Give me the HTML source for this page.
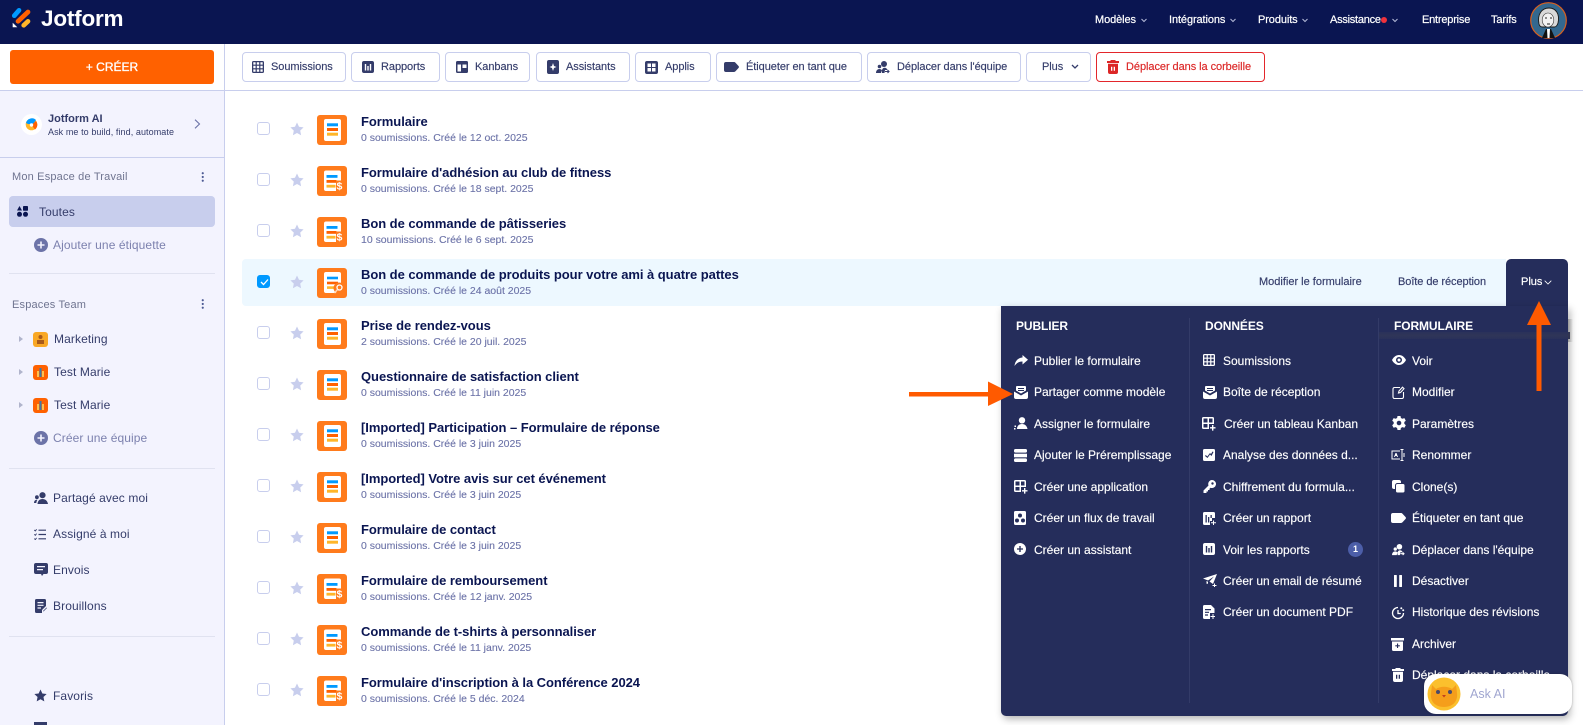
<!DOCTYPE html>
<html lang="fr"><head><meta charset="utf-8"><title>Jotform</title>
<style>
html,body{margin:0;padding:0}
body{width:1583px;height:725px;overflow:hidden;position:relative;background:#fff;font-family:"Liberation Sans",sans-serif;color:#0A1551}
div,span,svg{position:absolute}
.t{white-space:nowrap;line-height:16px}
svg.i{fill:currentColor;display:block}
.nav{top:12px;color:#fff;font-size:11px;-webkit-text-stroke:.2px #fff;letter-spacing:-.1px}
.btn{top:52px;height:28px;border:1px solid #C8CEED;border-radius:4px;background:#fff;box-sizing:content-box}
.bt{top:59px;font-size:11px;color:#343C6A;-webkit-text-stroke:.15px #343C6A;letter-spacing:-.06px}
.ti{top:61px;color:#343C6A}
.sb{font-size:12px;color:#343C6A;letter-spacing:.1px}
.sg{color:#7C81AE}
.sh{font-size:11px;color:#6F7490;letter-spacing:.18px;left:12px}
.si{left:34px;color:#343C6A}
.hr{left:9px;width:206px;height:1px;background:#E0E2F0}
.r{left:0;width:1000px;height:30px}
.cb{left:257px;top:7px;width:11px;height:11px;border:1.5px solid #C8CEED;border-radius:3px;background:#fff}
.st{left:290px;top:7px;color:#C8CEED}
.fi{left:317px;top:0}
.h{left:361px;top:-1px;font-size:13px;font-weight:700;color:#0A1551;letter-spacing:-.05px}
.s{left:361px;top:15px;font-size:10.5px;color:#6C73A8;letter-spacing:-.01px;-webkit-text-stroke:.12px #6C73A8}
.m{font-size:12px;color:#fff;-webkit-text-stroke:.15px #fff;letter-spacing:0}
.mh{top:318px;font-size:12px;font-weight:700;color:#fff;letter-spacing:-.1px}
.mi{color:#fff}
</style></head><body>
<svg width="0" height="0" style="position:absolute">
<defs>
<symbol id="f0" viewBox="0 0 30 30"><rect width="30" height="30" rx="3" fill="#FF7B1C"/><rect x="7" y="4" width="17" height="22" rx="2" fill="#fff"/><rect x="10" y="8.300" width="11" height="3" fill="#0099FF"/><rect x="10" y="13" width="11" height="3" fill="#FF6100"/><rect x="10" y="17.700" width="11" height="3" fill="#FFB629"/></symbol>
<symbol id="f1" viewBox="0 0 30 30"><rect width="30" height="30" rx="3" fill="#FF7B1C"/><rect x="7" y="4.500" width="17" height="20.500" rx="2" fill="#fff"/><rect x="9.500" y="9" width="11" height="2.800" fill="#0099FF"/><rect x="9.500" y="14" width="10" height="2.800" fill="#FF6100"/><rect x="9.500" y="18.800" width="9" height="2.800" fill="#FFB629"/><rect x="19" y="14.500" width="7" height="11" fill="#FF7B1C"/><text x="19.500" y="23.500" font-family="Liberation Sans" font-size="10.500" font-weight="700" fill="#fff">$</text></symbol>
<symbol id="f2" viewBox="0 0 30 30"><rect width="30" height="30" rx="3" fill="#FF7B1C"/><rect x="7" y="4" width="17" height="21" rx="2" fill="#fff"/><rect x="10" y="8.700" width="11" height="2.600" fill="#0099FF"/><rect x="10" y="13.700" width="11" height="2.600" fill="#FF6100"/><rect x="10" y="18.300" width="9" height="2.600" fill="#FFB629"/><circle cx="22" cy="20" r="5.500" fill="#FF7B1C"/><circle cx="22.500" cy="19.500" r="2.500" fill="none" stroke="#fff" stroke-width="1.300"/><path d="M20.500 21.500l-3 3.500" stroke="#FFD9B8" stroke-width="1.400"/></symbol>
<symbol id="star" viewBox="0 0 14 14"><path d="M7 .5l2 4.300 4.600.6-3.400 3.200.9 4.700L7 11l-4.100 2.300.9-4.700L.4 5.400 5 4.800z"/></symbol>
<symbol id="grid" viewBox="0 0 12 12"><path d="M1.500 0h9A1.500 1.500 0 0 1 12 1.500v9a1.500 1.500 0 0 1-1.500 1.500h-9A1.500 1.500 0 0 1 0 10.500v-9A1.500 1.500 0 0 1 1.500 0zM1.300 1.300v2.300h2.300V1.300zm3.500 0v2.300h2.400V1.300zm3.600 0v2.300h2.300V1.300zM1.300 4.800v2.400h2.300V4.800zm3.500 0v2.400h2.400V4.800zm3.600 0v2.400h2.300V4.800zM1.300 8.400v2.300h2.300V8.400zm3.500 0v2.300h2.400V8.400zm3.600 0v2.300h2.300V8.400z" fill-rule="evenodd"/></symbol>
<symbol id="rep" viewBox="0 0 12 12"><path d="M2 0h8a2 2 0 0 1 2 2v8a2 2 0 0 1-2 2H2a2 2 0 0 1-2-2V2a2 2 0 0 1 2-2zm.8 3v6.500h1.400V3zm2.500 2v4.500h1.400V5zm2.500-2v6.500h1.400V3z" fill-rule="evenodd"/></symbol>
<symbol id="kan" viewBox="0 0 12 12"><path d="M1.500 0h9A1.500 1.500 0 0 1 12 1.500v9a1.500 1.500 0 0 1-1.500 1.500h-9A1.500 1.500 0 0 1 0 10.500v-9A1.500 1.500 0 0 1 1.500 0zm0 3.500v7h3.500v-7zm5 0v3.500h4V3.500z" fill-rule="evenodd"/></symbol>
<symbol id="ast" viewBox="0 0 12 14"><path d="M2 0h8a2 2 0 0 1 2 2v10a2 2 0 0 1-2 2H2a2 2 0 0 1-2-2V2a2 2 0 0 1 2-2zm4 3L5 6 2.500 7 5 8l1 3 1-3 2.500-1L7 6z" fill-rule="evenodd"/></symbol>
<symbol id="app" viewBox="0 0 13 13"><path d="M2 0h9a2 2 0 0 1 2 2v9a2 2 0 0 1-2 2H2a2 2 0 0 1-2-2V2a2 2 0 0 1 2-2zm.500 2.500V6H6V2.500zm4.500 0V6h3.500V2.500zm-4.500 4.500v3.500H6V7zm4.500 0v3.500h3.500V7z" fill-rule="evenodd"/></symbol>
<symbol id="tag" viewBox="0 0 15 10"><path d="M2 0h8a2 2 0 0 1 1.500.7l3 3.300a1.500 1.500 0 0 1 0 2l-3 3.300A2 2 0 0 1 10 10H2a2 2 0 0 1-2-2V2a2 2 0 0 1 2-2z"/></symbol>
<symbol id="team" viewBox="0 0 14 13"><circle cx="8" cy="3" r="3"/><circle cx="3.500" cy="5.500" r="1.800"/><path d="M0 12c0-2.500 1.500-4 3.500-4 1 0 2 .5 2.500 1.300L5 12zM6 9c.5-1.500 1.500-2.200 2.500-2.200 1.500 0 2.500.8 3 2.200H9l-.5 3H6z"/><path d="M9 10.500h4M11.500 9l1.500 1.500-1.500 1.500" fill="none" stroke="currentColor" stroke-width="1.100"/></symbol>
<symbol id="shared" viewBox="0 0 14 13"><circle cx="8.500" cy="3.200" r="3.100"/><circle cx="2.900" cy="5.200" r="1.900"/><path d="M3.500 12c.2-3 2-5 5-5s5 2 5.500 5zM0 11c0-2 1-3.300 3-3.300l.4.100C2.700 9 2.400 10 2.300 11z"/></symbol>
<symbol id="trash" viewBox="0 0 12 14"><path d="M0 1h3.500V0h5v1H12v2H0zM1 3.800h10V12a2 2 0 0 1-2 2H3a2 2 0 0 1-2-2zm3 3v4h1.300v-4zm2.700 0v4H8v-4z" fill-rule="evenodd"/></symbol>
<symbol id="plus" viewBox="0 0 14 14"><path d="M7 0a7 7 0 1 1 0 14A7 7 0 0 1 7 0zM6.200 3.500v2.700H3.500v1.600h2.700v2.700h1.600V7.800h2.700V6.200H7.800V3.500z" fill-rule="evenodd"/></symbol>
<symbol id="keb" viewBox="0 0 4 12"><circle cx="2" cy="1.500" r="1.300"/><circle cx="2" cy="6" r="1.300"/><circle cx="2" cy="10.500" r="1.300"/></symbol>
<symbol id="inbox" viewBox="0 0 14 13"><path d="M3 0h8a1 1 0 0 1 1 1v3.500L7 7.500 2 4.500V1a1 1 0 0 1 1-1zM4 2v1h6V2zM4 4v1h6V4zM0 5.500l7 4 7-4V11a2 2 0 0 1-2 2H2a2 2 0 0 1-2-2z" fill-rule="evenodd"/></symbol>
<symbol id="share" viewBox="0 0 14 12"><path d="M8.500 0L14 4.700 8.500 9.500V6.500C5 6.500 2.500 8 .5 11c.5-4.500 3-8 8-8.500z"/></symbol>
<symbol id="assign" viewBox="0 0 14 13"><circle cx="8" cy="3.300" r="3.200"/><path d="M3 12c0-3 2-5 5-5s5 2 5.500 5zM.5 8.500h1.500V10H.5zM0 11h1.500v1.500H0z"/></symbol>
<symbol id="pre" viewBox="0 0 13 13"><rect y="0" width="13" height="3.600" rx="1.500"/><rect y="4.700" width="13" height="3.600" rx="0"/><rect y="9.400" width="13" height="3.600" rx="1.500"/></symbol>
<symbol id="cap" viewBox="0 0 14 14"><path d="M1.500 0h9A1.500 1.500 0 0 1 12 1.500V7H7v5H1.500A1.500 1.500 0 0 1 0 10.500v-9A1.500 1.500 0 0 1 1.500 0zm0 1.500V5.500H5.500v-4zm5.500 0V5.500h3.500v-4zM1.500 7v3.500h4V7zM10 8h1.400v2.100h2.100v1.400h-2.100v2.100H10v-2.100H8v-1.400h2z" fill-rule="evenodd"/></symbol>
<symbol id="flow" viewBox="0 0 12 14"><path d="M1.500 0h9A1.500 1.500 0 0 1 12 1.500v11a1.500 1.500 0 0 1-1.500 1.500h-9A1.500 1.500 0 0 1 0 12.500v-11A1.500 1.500 0 0 1 1.500 0zM6 2.500a2 2 0 1 0 0 4 2 2 0 0 0 0-4zM3 7.500a2 2 0 1 0 0 4 2 2 0 0 0 0-4zm6 0a2 2 0 1 0 0 4 2 2 0 0 0 0-4z" fill-rule="evenodd"/></symbol>
<symbol id="ana" viewBox="0 0 12 12"><path d="M1.500 0h9A1.500 1.500 0 0 1 12 1.500v9a1.500 1.500 0 0 1-1.500 1.500h-9A1.500 1.500 0 0 1 0 10.500v-9A1.500 1.500 0 0 1 1.500 0zM2 7l2.500 2L7 5.500 8.500 7 10.500 3l-1-.5L8 5 7 4 4.300 7.500 2.800 6z" fill-rule="evenodd"/></symbol>
<symbol id="key" viewBox="0 0 13 13"><path d="M9 0a4 4 0 1 1-1.500 7.700L6.500 8.700V10H5v1.500H3.500V13H.5v-2.500l5-5A4 4 0 0 1 9 0zm.5 2.300a1.200 1.200 0 1 0 0 2.400 1.200 1.200 0 0 0 0-2.400z" fill-rule="evenodd"/></symbol>
<symbol id="crep" viewBox="0 0 13 13"><path d="M1.500 0h9A1.500 1.500 0 0 1 12 1.500V6H9v3H7v4H1.500A1.500 1.500 0 0 1 0 11.500v-10A1.500 1.500 0 0 1 1.500 0zM2.500 3v7.500h1.300V3zm2.500 2v5.500h1.300V5zm2.500-2v3h1.300V3zM10 8.500h1v1.800h2v1h-2V13h-1v-1.700H8v-1h2z" fill-rule="evenodd"/></symbol>
<symbol id="mail" viewBox="0 0 14 13"><path d="M14 0L10 10 6.500 7.500 11 2.500 5 6.500 0 4.500zM3.500 7l1.500.8v2h-1.500zM11 9.500h1V11h1.500v1H12v1h-1v-1H9.500v-1H11z"/></symbol>
<symbol id="pdf" viewBox="0 0 12 14"><path d="M1.500 0H8l3.500 3.500V8H7v6H1.500A1.500 1.500 0 0 1 0 12.500v-11A1.500 1.500 0 0 1 1.500 0zM2 4v1.200h6V4zm0 2.700v1.200h4V6.700zm0 2.700v1.200h3V9.400zM9.500 9h1v2H12.500v1h-2v2h-1v-2h-2v-1h2z" fill-rule="evenodd"/></symbol>
<symbol id="eye" viewBox="0 0 14 10"><path d="M7 0c3 0 5.500 2 7 5-1.500 3-4 5-7 5S1.500 8 0 5c1.500-3 4-5 7-5zm0 2a3 3 0 1 0 0 6 3 3 0 0 0 0-6zm0 1.500a1.500 1.500 0 1 1 0 3 1.500 1.500 0 0 1 0-3z" fill-rule="evenodd"/></symbol>
<symbol id="edit" viewBox="0 0 13 13"><path d="M8 1.500H2.500a1.500 1.500 0 0 0-1.500 1.500v8a1.500 1.500 0 0 0 1.500 1.500h7.500a1.500 1.500 0 0 0 1.500-1.500V6M6.500 7l.5-2 3.500-3.800 1.500 1.500L8.500 6.500z" fill="none" stroke="currentColor" stroke-width="1.100"/></symbol>
<symbol id="gear" viewBox="0 0 14 14"><path d="M5.500 0h3l.4 2 1.500.8 2-.7 1.400 2.600-1.500 1.300v1.800l1.500 1.400-1.400 2.500-2-.6-1.500.9-.4 2h-3l-.4-2-1.500-.9-2 .6L.2 9.200l1.500-1.400V6L.2 4.700l1.400-2.600 2 .7 1.500-.8zM7 4.700a2.300 2.300 0 1 0 0 4.600 2.300 2.300 0 0 0 0-4.600z" fill-rule="evenodd"/></symbol>
<symbol id="ren" viewBox="0 0 14 12"><path d="M9 2H1v8h8M11 0v12M9.500 .5h3M9.500 11.500h3M13 4v4" fill="none" stroke="currentColor" stroke-width="1"/><path d="M3 8l1.500-4h1L7 8H6l-.3-1H4.300L4 8z"/></symbol>
<symbol id="clone" viewBox="0 0 13 13"><rect x="0" y="0" width="9" height="9" rx="2"/><rect x="3.500" y="3.500" width="9.500" height="9.500" rx="2" stroke="#252D5B" stroke-width="1"/></symbol>
<symbol id="pause" viewBox="0 0 8 12"><rect width="2.800" height="12" rx=".5"/><rect x="5.200" width="2.800" height="12" rx=".5"/></symbol>
<symbol id="hist" viewBox="0 0 14 14"><path d="M7 1.500A5.500 5.500 0 1 0 12.500 7M7 4v3.500h2.800" fill="none" stroke="currentColor" stroke-width="1.300"/><circle cx="10.300" cy="2.300" r="1"/><circle cx="12.200" cy="4.300" r="1"/></symbol>
<symbol id="arch" viewBox="0 0 13 13"><path d="M0 0h13v2.500H0zM1 3.500h11V11.500a1.500 1.500 0 0 1-1.500 1.500h-8A1.500 1.500 0 0 1 1 11.500zM6 5.500v1.700H4.300v1.200H6V10h1.100V8.400h1.700V7.200H7.100V5.500z" fill-rule="evenodd"/></symbol>
<symbol id="toutes" viewBox="0 0 11 11"><path d="M2.500 0L5 4.500H0z"/><rect x="6" y="0" width="5" height="4.800" rx=".8"/><circle cx="2.500" cy="8.300" r="2.500"/><circle cx="8.500" cy="8.300" r="2.500"/></symbol>
<symbol id="assm" viewBox="0 0 12 11"><path d="M4.500 1.200H12M4.500 5.500H12M4.500 9.800H12" stroke="currentColor" stroke-width="1.200" fill="none"/><path d="M.3 1l1 1 1.300-1.700M.3 5.300l1 1 1.300-1.700M.3 9.600l1 1 1.300-1.700" stroke="currentColor" stroke-width=".9" fill="none"/></symbol>
<symbol id="env" viewBox="0 0 14 13"><path d="M2 0h10a2 2 0 0 1 2 2v7a2 2 0 0 1-2 2H9.500L8 13l-1-2H2a2 2 0 0 1-2-2V2a2 2 0 0 1 2-2zm1 3v1.300h8V3zm0 3v1.300h6V6z" fill-rule="evenodd"/></symbol>
<symbol id="bro" viewBox="0 0 12 14"><path d="M1.500 0h8A1.500 1.500 0 0 1 11 1.500V7L7 11v3H1.500A1.500 1.500 0 0 1 0 12.500v-11A1.500 1.500 0 0 1 1.500 0zm1 3v1.200h6V3zm0 2.700v1.200h6V5.700zm0 2.700v1.200H6V8.400z" fill-rule="evenodd"/><path d="M8 12l3.500-3.500.5.500-3.500 3.500z"/></symbol>
</defs></svg>

<!-- header -->
<div style="left:0;top:0;width:1583px;height:44px;background:#0A1551"></div>
<svg style="left:0;top:0" width="40" height="44" viewBox="0 0 40 44"><path d="M14.300 15.700L19 10.300" stroke="#0099FF" stroke-width="4.700" stroke-linecap="round"/><path d="M18 21.300L28 12" stroke="#FF6100" stroke-width="4.700" stroke-linecap="round"/><path d="M23.700 25.300L28 21.300" stroke="#FFB629" stroke-width="4.700" stroke-linecap="round"/><path d="M12.700 22.700v4.600h4.600z" fill="#fff"/></svg>
<div class="t" style="left:41px;top:7px;line-height:24px;font-size:22.5px;font-weight:700;color:#fff;letter-spacing:-.2px">Jotform</div>
<div class="t nav" style="left:1095px">Modèles</div>
<svg style="left:1141px;top:18px" width="6" height="5" viewBox="0 0 6 5"><path d="M.5 1l2.500 2.500L5.500 1" fill="none" stroke="#B5BAD8" stroke-width="1"/></svg>
<div class="t nav" style="left:1169px">Intégrations</div>
<svg style="left:1230px;top:18px" width="6" height="5" viewBox="0 0 6 5"><path d="M.5 1l2.500 2.500L5.500 1" fill="none" stroke="#B5BAD8" stroke-width="1"/></svg>
<div class="t nav" style="left:1258px">Produits</div>
<svg style="left:1302px;top:18px" width="6" height="5" viewBox="0 0 6 5"><path d="M.5 1l2.500 2.500L5.500 1" fill="none" stroke="#B5BAD8" stroke-width="1"/></svg>
<div class="t nav" style="left:1330px;letter-spacing:-.25px">Assistance</div>
<div style="left:1381px;top:17px;width:6px;height:6px;border-radius:50%;background:#F0323C"></div>
<svg style="left:1392px;top:18px" width="6" height="5" viewBox="0 0 6 5"><path d="M.5 1l2.500 2.500L5.500 1" fill="none" stroke="#B5BAD8" stroke-width="1"/></svg>
<div class="t nav" style="left:1422px;letter-spacing:-.2px">Entreprise</div>
<div class="t nav" style="left:1491px">Tarifs</div>
<svg style="left:1530px;top:2px" width="37" height="37" viewBox="0 0 37 37"><circle cx="18.500" cy="18.500" r="17.800" fill="#33688F" stroke="#D9601E" stroke-width="1.200"/><path d="M9 22c-2-10 3-16 10-16s11 6 9 15c-.5 2-2 4-3.500 4h-12C11 25 9.500 24 9 22z" fill="#D9D9D9" stroke="#1a1a1a" stroke-width=".9"/><ellipse cx="18" cy="18" rx="5.800" ry="7" fill="#F2F2F2" stroke="#333" stroke-width=".6"/><path d="M15 16h2M20 16h2M17 22h3" stroke="#222" stroke-width="1"/><path d="M12 36l4-9h5l4 9z" fill="#111"/><path d="M17 27h3l-.5 9h-2z" fill="#fff"/></svg>

<!-- sidebar -->
<div style="left:0;top:44px;width:224px;height:46px;background:#fff"></div>
<div style="left:0;top:90px;width:224px;height:635px;background:#F3F3FE"></div>
<div style="left:224px;top:44px;width:1px;height:681px;background:#C8CEED"></div>
<div style="left:0;top:90px;width:1583px;height:1px;background:#C8CEED"></div>
<div style="left:10px;top:50px;width:204px;height:34px;background:#FF6100;border-radius:3px"></div>
<div class="t" style="left:10px;top:59px;width:204px;text-align:center;color:#fff;font-size:12px;-webkit-text-stroke:.3px #fff">+ CRÉER</div>

<div style="left:21px;top:114px;width:21px;height:21px;border-radius:50%;background:#fff"></div>
<svg style="left:25px;top:118px" width="13" height="13" viewBox="0 0 13 13"><circle cx="6.500" cy="6.500" r="5.800" fill="#FFB629"/><path d="M1 5a6 6 0 0 1 10-3L8 6H3z" fill="#0099FF"/><path d="M11 3a6 6 0 0 1-1 8.500L6.500 7z" fill="#FF6100"/><circle cx="6.500" cy="7" r="1.700" fill="#fff"/></svg>
<div class="t" style="left:48px;top:111px;font-size:11px;font-weight:700;color:#343C6A">Jotform AI</div>
<div class="t" style="left:48px;top:124px;font-size:9px;color:#343C6A;letter-spacing:.08px">Ask me to build, find, automate</div>
<svg style="left:194px;top:119px" width="7" height="10" viewBox="0 0 7 10"><path d="M1 .7L5.500 5 1 9.300" fill="none" stroke="#6C73A8" stroke-width="1.100"/></svg>
<div style="left:0;top:157px;width:224px;height:1px;background:#C8CEED"></div>

<div class="t sh" style="top:169px">Mon Espace de Travail</div>
<svg class="i" style="left:201px;top:172px;color:#4C5A94" width="3.500" height="10"><use href="#keb"/></svg>
<div style="left:9px;top:196px;width:206px;height:31px;background:#C8CEED;border-radius:4px"></div>
<svg class="i" style="left:17px;top:206px;color:#0A1551" width="11" height="11"><use href="#toutes"/></svg>
<div class="t sb" style="left:39px;top:204px;color:#343C6A">Toutes</div>
<svg class="i" style="left:34px;top:238px;color:#6C73A8" width="14" height="14"><use href="#plus"/></svg>
<div class="t sb sg" style="left:53px;top:237px">Ajouter une étiquette</div>
<div class="hr" style="top:273px"></div>

<div class="t sh" style="top:297px">Espaces Team</div>
<svg class="i" style="left:201px;top:299px;color:#4C5A94" width="3.500" height="10"><use href="#keb"/></svg>
<svg style="left:19px;top:336px" width="4" height="6" viewBox="0 0 4 6"><path d="M0 0l4 3-4 3z" fill="#B0B4CC"/></svg>
<div style="left:33px;top:332px;width:15px;height:15px;border-radius:3px;background:#F9A825"></div>
<svg style="left:36px;top:334px" width="9" height="11" viewBox="0 0 9 11"><rect x="2.500" y="1" width="4" height="4" rx="2" fill="#A85A1A"/><rect x="1" y="6" width="7" height="4" fill="#A85A1A"/></svg>
<div class="t sb" style="left:54px;top:331px">Marketing</div>
<svg style="left:19px;top:369px" width="4" height="6" viewBox="0 0 4 6"><path d="M0 0l4 3-4 3z" fill="#B0B4CC"/></svg>
<div style="left:33px;top:365px;width:15px;height:15px;border-radius:3px;background:#FF6100"></div>
<svg style="left:36px;top:368px" width="9" height="9" viewBox="0 0 9 9"><rect x="1" y="3" width="2" height="6" fill="#FFC04D"/><rect x="3.500" y="0" width="2" height="9" fill="#3E7BA6"/><rect x="6" y="3" width="2" height="6" fill="#FFC04D"/></svg>
<div class="t sb" style="left:54px;top:364px">Test Marie</div>
<svg style="left:19px;top:402px" width="4" height="6" viewBox="0 0 4 6"><path d="M0 0l4 3-4 3z" fill="#B0B4CC"/></svg>
<div style="left:33px;top:398px;width:15px;height:15px;border-radius:3px;background:#FF6100"></div>
<svg style="left:36px;top:401px" width="9" height="9" viewBox="0 0 9 9"><rect x="1" y="3" width="2" height="6" fill="#FFC04D"/><rect x="3.500" y="0" width="2" height="9" fill="#3E7BA6"/><rect x="6" y="3" width="2" height="6" fill="#FFC04D"/></svg>
<div class="t sb" style="left:54px;top:397px">Test Marie</div>
<svg class="i" style="left:34px;top:431px;color:#6C73A8" width="14" height="14"><use href="#plus"/></svg>
<div class="t sb sg" style="left:53px;top:430px">Créer une équipe</div>
<div class="hr" style="top:468px"></div>

<svg class="i si" style="top:492px;color:#343C6A" width="14" height="13"><use href="#shared"/></svg>
<div class="t sb" style="left:53px;top:490px">Partagé avec moi</div>
<svg class="i si" style="top:529px" width="12" height="11"><use href="#assm"/></svg>
<div class="t sb" style="left:53px;top:526px">Assigné à moi</div>
<svg class="i si" style="top:563px" width="14" height="13"><use href="#env"/></svg>
<div class="t sb" style="left:53px;top:562px">Envois</div>
<svg class="i si" style="left:35px;top:599px" width="12" height="14"><use href="#bro"/></svg>
<div class="t sb" style="left:53px;top:598px">Brouillons</div>
<div class="hr" style="top:636px"></div>
<svg class="i si" style="top:689px" width="13" height="13"><use href="#star"/></svg>
<div class="t sb" style="left:53px;top:688px">Favoris</div>
<div style="left:34px;top:722px;width:13px;height:3px;background:#343C6A"></div>

<!-- toolbar -->
<div class="btn" style="left:242px;width:102px"></div>
<svg class="i ti" style="left:252px" width="12" height="12"><use href="#grid"/></svg>
<div class="t bt" style="left:271px">Soumissions</div>
<div class="btn" style="left:351px;width:87px"></div>
<svg class="i ti" style="left:362px" width="12" height="12"><use href="#rep"/></svg>
<div class="t bt" style="left:381px">Rapports</div>
<div class="btn" style="left:445px;width:83px"></div>
<svg class="i ti" style="left:456px" width="12" height="12"><use href="#kan"/></svg>
<div class="t bt" style="left:475px">Kanbans</div>
<div class="btn" style="left:536px;width:92px"></div>
<svg class="i ti" style="left:547px;top:60px" width="12" height="14"><use href="#ast"/></svg>
<div class="t bt" style="left:566px">Assistants</div>
<div class="btn" style="left:635px;width:74px"></div>
<svg class="i ti" style="left:645px" width="13" height="13"><use href="#app"/></svg>
<div class="t bt" style="left:665px">Applis</div>
<div class="btn" style="left:716px;width:144px"></div>
<svg class="i ti" style="left:724px;top:62px" width="15" height="10"><use href="#tag"/></svg>
<div class="t bt" style="left:746px">Étiqueter en tant que</div>
<div class="btn" style="left:867px;width:152px"></div>
<svg class="i ti" style="left:876px" width="14" height="13"><use href="#team"/></svg>
<div class="t bt" style="left:897px">Déplacer dans l'équipe</div>
<div class="btn" style="left:1026px;width:63px"></div>
<div class="t bt" style="left:1042px">Plus</div>
<svg style="left:1071px;top:64px" width="8" height="6" viewBox="0 0 8 6"><path d="M1 1l3 3 3-3" fill="none" stroke="#343C6A" stroke-width="1.300"/></svg>
<div class="btn" style="left:1096px;width:167px;border-color:#E3262B"></div>
<svg class="i" style="left:1107px;top:60px;color:#DC2626" width="12" height="14"><use href="#trash"/></svg>
<div class="t bt" style="left:1126px;color:#DC2626;-webkit-text-stroke:.15px #DC2626">Déplacer dans la corbeille</div>

<!-- selected row bg -->
<div style="left:242px;top:259px;width:1264px;height:47px;background:#EDF8FF;border-radius:4px 0 0 4px"></div>

<!-- rows -->
<div class="r" style="top:115px"><div class="cb"></div><svg class="i st" width="14" height="14"><use href="#star"/></svg><svg class="fi" width="30" height="30"><use href="#f0"/></svg><div class="t h">Formulaire</div><div class="t s">0 soumissions. Créé le 12 oct. 2025</div></div>
<div class="r" style="top:166px"><div class="cb"></div><svg class="i st" width="14" height="14"><use href="#star"/></svg><svg class="fi" width="30" height="30"><use href="#f1"/></svg><div class="t h">Formulaire d'adhésion au club de fitness</div><div class="t s">0 soumissions. Créé le 18 sept. 2025</div></div>
<div class="r" style="top:217px"><div class="cb"></div><svg class="i st" width="14" height="14"><use href="#star"/></svg><svg class="fi" width="30" height="30"><use href="#f1"/></svg><div class="t h">Bon de commande de pâtisseries</div><div class="t s">10 soumissions. Créé le 6 sept. 2025</div></div>
<div class="r" style="top:268px"><div class="cb" style="background:#0099FF;border-color:#0099FF"></div><svg style="left:260px;top:10px" width="9" height="8" viewBox="0 0 9 8"><path d="M1 4l2.500 2.500L8 1.500" fill="none" stroke="#fff" stroke-width="1.300"/></svg><svg class="i st" width="14" height="14"><use href="#star"/></svg><svg class="fi" width="30" height="30"><use href="#f2"/></svg><div class="t h">Bon de commande de produits pour votre ami à quatre pattes</div><div class="t s">0 soumissions. Créé le 24 août 2025</div></div>
<div class="r" style="top:319px"><div class="cb"></div><svg class="i st" width="14" height="14"><use href="#star"/></svg><svg class="fi" width="30" height="30"><use href="#f0"/></svg><div class="t h">Prise de rendez-vous</div><div class="t s">2 soumissions. Créé le 20 juil. 2025</div></div>
<div class="r" style="top:370px"><div class="cb"></div><svg class="i st" width="14" height="14"><use href="#star"/></svg><svg class="fi" width="30" height="30"><use href="#f0"/></svg><div class="t h">Questionnaire de satisfaction client</div><div class="t s">0 soumissions. Créé le 11 juin 2025</div></div>
<div class="r" style="top:421px"><div class="cb"></div><svg class="i st" width="14" height="14"><use href="#star"/></svg><svg class="fi" width="30" height="30"><use href="#f0"/></svg><div class="t h">[Imported] Participation – Formulaire de réponse</div><div class="t s">0 soumissions. Créé le 3 juin 2025</div></div>
<div class="r" style="top:472px"><div class="cb"></div><svg class="i st" width="14" height="14"><use href="#star"/></svg><svg class="fi" width="30" height="30"><use href="#f0"/></svg><div class="t h">[Imported] Votre avis sur cet événement</div><div class="t s">0 soumissions. Créé le 3 juin 2025</div></div>
<div class="r" style="top:523px"><div class="cb"></div><svg class="i st" width="14" height="14"><use href="#star"/></svg><svg class="fi" width="30" height="30"><use href="#f0"/></svg><div class="t h">Formulaire de contact</div><div class="t s">0 soumissions. Créé le 3 juin 2025</div></div>
<div class="r" style="top:574px"><div class="cb"></div><svg class="i st" width="14" height="14"><use href="#star"/></svg><svg class="fi" width="30" height="30"><use href="#f1"/></svg><div class="t h">Formulaire de remboursement</div><div class="t s">0 soumissions. Créé le 12 janv. 2025</div></div>
<div class="r" style="top:625px"><div class="cb"></div><svg class="i st" width="14" height="14"><use href="#star"/></svg><svg class="fi" width="30" height="30"><use href="#f1"/></svg><div class="t h">Commande de t-shirts à personnaliser</div><div class="t s">0 soumissions. Créé le 11 janv. 2025</div></div>
<div class="r" style="top:676px"><div class="cb"></div><svg class="i st" width="14" height="14"><use href="#star"/></svg><svg class="fi" width="30" height="30"><use href="#f1"/></svg><div class="t h">Formulaire d'inscription à la Conférence 2024</div><div class="t s">0 soumissions. Créé le 5 déc. 2024</div></div>

<div class="t" style="left:1259px;top:274px;font-size:11px;color:#343C6A;-webkit-text-stroke:.15px #343C6A">Modifier le formulaire</div>
<div class="t" style="left:1398px;top:274px;font-size:11px;color:#343C6A;-webkit-text-stroke:.15px #343C6A;letter-spacing:-.07px">Boîte de réception</div>

<!-- menu -->
<div style="left:1506px;top:259px;width:62px;height:60px;background:#252D5B;border-radius:5px 5px 0 0"></div>
<div class="t" style="left:1521px;top:274px;font-size:11px;color:#fff;-webkit-text-stroke:.2px #fff">Plus</div>
<svg style="left:1544px;top:280px" width="8" height="5" viewBox="0 0 8 5"><path d="M.7.7L4 4 7.300.7" fill="none" stroke="#fff" stroke-width=".8"/></svg>
<div style="left:1001px;top:306px;width:567px;height:410px;background:#252D5B;border-radius:0 0 5px 5px;box-shadow:2px 3px 8px rgba(0,0,0,.3)"></div>
<div style="left:1001px;top:306px;width:12px;height:12px;background:#252D5B;border-radius:5px 0 0 0"></div>
<div style="left:1379px;top:332px;width:191px;height:7px;background:linear-gradient(#2a315a,#2f3558,#2a315a)"></div>
<div style="left:1568px;top:319px;width:5px;height:23px;background:linear-gradient(90deg,rgba(60,60,60,.35),rgba(60,60,60,0))"></div>
<div style="left:1189px;top:318px;width:1px;height:385px;background:#333B68"></div>
<div style="left:1378px;top:318px;width:1px;height:385px;background:#333B68"></div>
<div class="t mh" style="left:1016px">PUBLIER</div>
<div class="t mh" style="left:1205px">DONNÉES</div>
<div class="t mh" style="left:1394px">FORMULAIRE</div>

<svg class="i mi" style="left:1014px;top:355px" width="14" height="12"><use href="#share"/></svg>
<div class="t m" style="left:1034px;top:353px">Publier le formulaire</div>
<svg class="i mi" style="left:1014px;top:386px" width="14" height="13"><use href="#inbox"/></svg>
<div class="t m" style="left:1034px;top:384px">Partager comme modèle</div>
<svg class="i mi" style="left:1014px;top:417px" width="14" height="13"><use href="#assign"/></svg>
<div class="t m" style="left:1034px;top:416px">Assigner le formulaire</div>
<svg class="i mi" style="left:1014px;top:449px" width="13" height="13"><use href="#pre"/></svg>
<div class="t m" style="left:1034px;top:447px">Ajouter le Préremplissage</div>
<svg class="i mi" style="left:1014px;top:480px" width="14" height="14"><use href="#cap"/></svg>
<div class="t m" style="left:1034px;top:479px">Créer une application</div>
<svg class="i mi" style="left:1014px;top:511px" width="12" height="14"><use href="#flow"/></svg>
<div class="t m" style="left:1034px;top:510px">Créer un flux de travail</div>
<svg class="i mi" style="left:1014px;top:543px" width="12" height="12"><use href="#plus"/></svg>
<div class="t m" style="left:1034px;top:542px">Créer un assistant</div>

<svg class="i mi" style="left:1203px;top:354px" width="12" height="12"><use href="#grid"/></svg>
<div class="t m" style="left:1223px;top:353px">Soumissions</div>
<svg class="i mi" style="left:1203px;top:386px" width="14" height="13"><use href="#inbox"/></svg>
<div class="t m" style="left:1223px;top:384px">Boîte de réception</div>
<svg class="i mi" style="left:1202px;top:417px" width="14" height="14"><use href="#cap"/></svg>
<div class="t m" style="left:1224px;top:416px">Créer un tableau Kanban</div>
<svg class="i mi" style="left:1203px;top:449px" width="12" height="12"><use href="#ana"/></svg>
<div class="t m" style="left:1223px;top:447px">Analyse des données d...</div>
<svg class="i mi" style="left:1203px;top:480px" width="13" height="13"><use href="#key"/></svg>
<div class="t m" style="left:1223px;top:479px">Chiffrement du formula...</div>
<svg class="i mi" style="left:1203px;top:512px" width="13" height="13"><use href="#crep"/></svg>
<div class="t m" style="left:1223px;top:510px">Créer un rapport</div>
<svg class="i mi" style="left:1203px;top:543px" width="12" height="12"><use href="#rep"/></svg>
<div class="t m" style="left:1223px;top:542px">Voir les rapports</div>
<div style="left:1348px;top:542px;width:15px;height:15px;border-radius:50%;background:#4C5EA8"></div>
<div class="t" style="left:1348px;top:542px;width:15px;line-height:15px;text-align:center;font-size:9px;font-weight:700;color:#fff">1</div>
<svg class="i mi" style="left:1203px;top:574px" width="14" height="13"><use href="#mail"/></svg>
<div class="t m" style="left:1223px;top:573px">Créer un email de résumé</div>
<svg class="i mi" style="left:1203px;top:605px" width="12" height="14"><use href="#pdf"/></svg>
<div class="t m" style="left:1223px;top:604px">Créer un document PDF</div>

<svg class="i mi" style="left:1392px;top:355px" width="14" height="10"><use href="#eye"/></svg>
<div class="t m" style="left:1412px;top:353px">Voir</div>
<svg class="i mi" style="left:1392px;top:386px" width="13" height="13"><use href="#edit"/></svg>
<div class="t m" style="left:1412px;top:384px">Modifier</div>
<svg class="i mi" style="left:1392px;top:416px" width="14" height="14"><use href="#gear"/></svg>
<div class="t m" style="left:1412px;top:416px">Paramètres</div>
<svg class="i mi" style="left:1391px;top:449px" width="14" height="12"><use href="#ren"/></svg>
<div class="t m" style="left:1412px;top:447px">Renommer</div>
<svg class="i mi" style="left:1392px;top:480px" width="13" height="13"><use href="#clone"/></svg>
<div class="t m" style="left:1412px;top:479px">Clone(s)</div>
<svg class="i mi" style="left:1391px;top:513px" width="15" height="10"><use href="#tag"/></svg>
<div class="t m" style="left:1412px;top:510px">Étiqueter en tant que</div>
<svg class="i mi" style="left:1392px;top:544px" width="13" height="12"><use href="#team"/></svg>
<div class="t m" style="left:1412px;top:542px">Déplacer dans l'équipe</div>
<svg class="i mi" style="left:1394px;top:575px" width="8" height="12"><use href="#pause"/></svg>
<div class="t m" style="left:1412px;top:573px">Désactiver</div>
<svg class="i mi" style="left:1391px;top:606px" width="14" height="14"><use href="#hist"/></svg>
<div class="t m" style="left:1412px;top:604px">Historique des révisions</div>
<svg class="i mi" style="left:1391px;top:638px" width="13" height="13"><use href="#arch"/></svg>
<div class="t m" style="left:1412px;top:636px">Archiver</div>
<svg class="i mi" style="left:1392px;top:668px" width="12" height="14"><use href="#trash"/></svg>
<div class="t m" style="left:1412px;top:667px">Déplacer dans la corbeille</div>

<!-- Ask AI -->
<div style="left:1424px;top:674px;width:148px;height:40px;background:#fff;border-radius:12px;box-shadow:0 0 2px rgba(0,0,0,.25)"></div>
<svg style="left:1427px;top:677px" width="34" height="34" viewBox="0 0 34 34"><circle cx="17" cy="17" r="16.500" fill="#FBC02D"/><path d="M5 8l4 4c4-3 12-3 16 0l4-4 1 8c1 7-3 14-13 14S3 23 4 16z" fill="#F59E1B"/><circle cx="11" cy="15" r="2" fill="#4A4A6A"/><circle cx="23" cy="15" r="2" fill="#4A4A6A"/><path d="M15 18h4l-2 2.500z" fill="#C2401C"/></svg>
<div class="t" style="left:1470px;top:686px;font-size:12.5px;color:#A0A6D0">Ask AI</div>

<!-- arrows -->
<svg style="left:905px;top:378px" width="112" height="32" viewBox="0 0 112 32"><rect x="4" y="14" width="80" height="4.500" fill="#FF5A00"/><path d="M83 3.500L108 16 83 28z" fill="#FF5A00"/></svg>
<svg style="left:1524px;top:298px" width="30" height="96" viewBox="0 0 30 96"><path d="M15 3L27 27H3z" fill="#FF5A00"/><rect x="12.500" y="26" width="5" height="67" fill="#FF5A00"/></svg>
</body></html>
